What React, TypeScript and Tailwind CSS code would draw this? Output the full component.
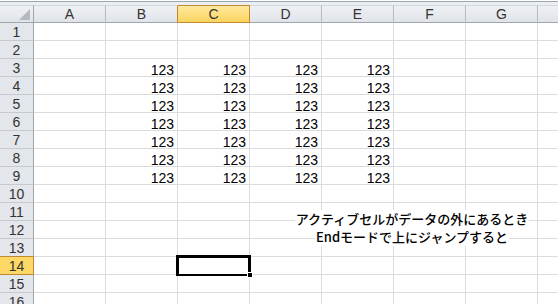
import React from "react";

const COLS = ["A", "B", "C", "D", "E", "F", "G", "H"];
const ROWS = Array.from({ length: 16 }, (_, i) => i + 1);

function HeaderCell({ label }: { label: string }) {
  const isSel = label === "C";
  const base =
    "h-[18px] w-[72px] shrink-0 flex items-center justify-center border-t border-b border-r text-[14px] text-[#333]";
  if (isSel) {
    return (
      <div
        className={`${base} border-[#c28a30] bg-gradient-to-b from-[#ffe99c] to-[#fad45c]`}
      >
        {label}
      </div>
    );
  }
  return (
    <div
      className={`${base} ${
        label === "B" ? "border-r-[#c28a30]" : "border-r-[#b5bac1]"
      } border-t-[#d3d8de] border-b-[#9ea6b0] bg-gradient-to-b from-[#eef0f3] to-[#e0e4e9]`}
    >
      {label === "H" ? "" : label}
    </div>
  );
}

export default function App() {
  return (
    <div
      className="relative w-[558px] h-[304px] overflow-hidden bg-white"
      style={{ fontFamily: '"Liberation Sans", Arial, sans-serif' }}
    >
      {/* top strip */}
      <div className="h-[5px] flex flex-col">
        <div className="h-px bg-white" />
        <div className="h-px bg-[#9aa5b5]" />
        <div className="h-[3px] bg-[#eceff2]" />
      </div>

      {/* column header row */}
      <div className="flex w-[610px]">
        <div className="w-[34px] shrink-0 h-[18px] border-t border-b border-r border-t-[#d3d8de] border-b-[#9ea6b0] border-r-[#9ea6b0] bg-gradient-to-b from-[#eef0f3] to-[#e0e4e9] flex items-end justify-end pr-[3px] pb-[2px]">
          <svg width="11" height="11" viewBox="0 0 11 11">
            <polygon points="11,0 11,11 0,11" fill="#b4b9c0" />
          </svg>
        </div>
        {COLS.map((c) => (
          <HeaderCell key={c} label={c} />
        ))}
      </div>

      {/* rows */}
      {ROWS.map((r) => {
        const sel = r === 14;
        const hasNum = r >= 3 && r <= 9;
        return (
          <div key={r} className="flex h-[18px] w-[610px]">
            <div
              className={`w-[34px] shrink-0 border-b border-r flex items-center justify-center pt-[2px] text-[14px] text-[#333] ${
                sel
                  ? "bg-[#fdd866] border-[#c28a30]"
                  : r === 13
                  ? "bg-[#e3e6ea] border-b-[#c28a30] border-r-[#9ea6b0]"
                  : "bg-[#e3e6ea] border-b-[#c6cad0] border-r-[#9ea6b0]"
              }`}
            >
              {r}
            </div>
            {COLS.map((c) => {
              const showNum = hasNum && ["B", "C", "D", "E"].includes(c);
              return (
                <div
                  key={c}
                  className="w-[72px] shrink-0 border-b border-r border-[#dadcdd] flex items-end justify-end pr-[3px] text-[14px] leading-[12px] text-black"
                >
                  {showNum ? "123" : ""}
                </div>
              );
            })}
          </div>
        );
      })}

      {/* text box annotation */}
      <div
        className="absolute left-[280px] top-[210px] w-[264px] flex flex-col items-center text-[13px] leading-[18px] font-medium text-black"
        style={{ fontFamily: '"Noto Sans CJK JP", "Noto Sans", sans-serif' }}
      >
        <span className="bg-white px-[1px]">アクティブセルがデータの外にあるとき</span>
        <span className="bg-white px-[1px]">Endモードで上にジャンプすると</span>
      </div>

      {/* active cell C14 */}
      <div className="absolute left-[176px] top-[255px] w-[75px] h-[21px] border-[3px] border-b-2 border-black" />
      <div className="absolute left-[247px] top-[272px] w-[6px] h-[6px] bg-black border border-white" />
    </div>
  );
}
